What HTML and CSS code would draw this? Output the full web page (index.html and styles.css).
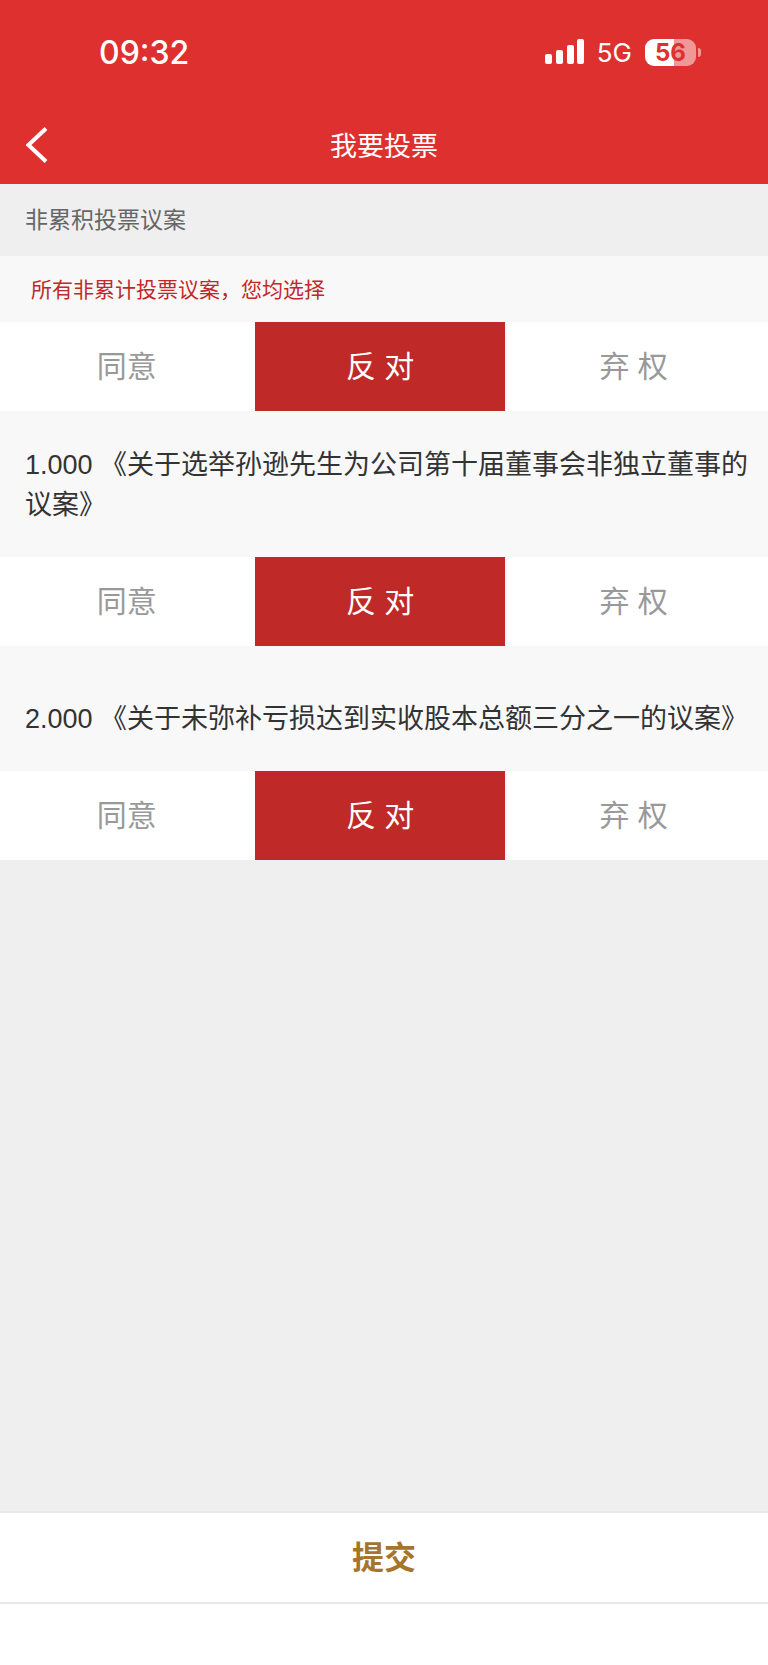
FILE: index.html
```html
<!DOCTYPE html>
<html lang="zh-CN">
<head>
    <meta charset="UTF-8">
    <meta name="viewport" content="width=device-width, initial-scale=1.0">
    <title>我要投票</title>
    <link rel="stylesheet" href="styles.css">
</head>
<body>
    <header class="header">
        <div class="status-bar">
            <span class="time">09:32</span>
            <div class="status-right">
                <svg class="signal" width="40" height="26" viewBox="0 0 40 26" fill="#fff">
                    <rect x="0" y="15" width="7" height="10" rx="2"/>
                    <rect x="11" y="11" width="7" height="14" rx="2"/>
                    <rect x="22" y="6" width="7" height="19" rx="2"/>
                    <rect x="32" y="0" width="7" height="25" rx="2"/>
                </svg>
                <span class="network">5G</span>
                <span class="battery">56</span>
            </div>
        </div>
        <div class="nav-bar">
            <button type="button" class="back" aria-label="返回">
                <svg width="22" height="36" viewBox="0 0 22 36" fill="none" stroke="#fff" stroke-width="4">
                    <path d="M20 1.5L2.5 18L20 34.5"/>
                </svg>
            </button>
            <h1>我要投票</h1>
        </div>
    </header>

    <form class="vote-form">
        <h2 class="section-title">非累积投票议案</h2>

        <p class="hint">所有非累计投票议案，您均选择</p>
        <div class="options">
            <label class="option"><input type="radio" name="all" value="1"><span>同意</span></label>
            <label class="option"><input type="radio" name="all" value="2" checked><span>反 对</span></label>
            <label class="option"><input type="radio" name="all" value="3"><span>弃 权</span></label>
        </div>

        <p class="proposal">1.000 《关于选举孙逊先生为公司第十届董事会非独立董事的议案》</p>
        <div class="options">
            <label class="option"><input type="radio" name="p1" value="1"><span>同意</span></label>
            <label class="option"><input type="radio" name="p1" value="2" checked><span>反 对</span></label>
            <label class="option"><input type="radio" name="p1" value="3"><span>弃 权</span></label>
        </div>

        <p class="proposal">2.000 《关于未弥补亏损达到实收股本总额三分之一的议案》</p>
        <div class="options">
            <label class="option"><input type="radio" name="p2" value="1"><span>同意</span></label>
            <label class="option"><input type="radio" name="p2" value="2" checked><span>反 对</span></label>
            <label class="option"><input type="radio" name="p2" value="3"><span>弃 权</span></label>
        </div>

        <div class="footer">
            <button type="submit" class="submit">提交</button>
        </div>
    </form>
</body>
</html>
```
FILE: styles.css
```css
* {
    box-sizing: border-box;
}
body {
    display: flex;
    flex-direction: column;
    min-height: 100vh;
    margin: 0;
    background-color: #efefef;
    color: #333;
    font-family: "Liberation Sans", "Noto Sans CJK SC", sans-serif;
}
h1, h2, p {
    margin: 0;
    font-weight: normal;
}
button {
    border: none;
    background: none;
    font-family: inherit;
    cursor: pointer;
}

/* 顶部 */
.header {
    background-color: #df3030;
    color: #fff;
}
.status-bar {
    display: flex;
    align-items: center;
    justify-content: space-between;
    height: 104px;
    padding: 0 72px 0 99px;
    font-family: Inter, sans-serif;
}
.time {
    font-size: 32px;
    font-weight: 500;
}
.status-right {
    display: flex;
    align-items: center;
}
.network {
    margin: 0 13px 0 12px;
    font-size: 26px;
    font-weight: 400;
}
.battery {
    position: relative;
    width: 51px;
    height: 27px;
    border-radius: 9px;
    background: linear-gradient(to right, #fff 56%, #f09797 56%);
    color: #df3030;
    font-size: 24px;
    font-weight: 700;
    line-height: 27px;
    text-align: center;
}
.battery::after {
    content: "";
    position: absolute;
    top: 9px;
    right: -5px;
    width: 3px;
    height: 9px;
    border-radius: 0 4px 4px 0;
    background-color: #f09797;
}
.nav-bar {
    display: grid;
    grid-template-columns: 100px 1fr 100px;
    align-items: center;
    height: 80px;
}
.back {
    display: flex;
    padding: 6px 26px 4px;
}
.nav-bar h1 {
    font-size: 27px;
    text-align: center;
}

/* 投票内容 */
.vote-form {
    display: flex;
    flex: 1;
    flex-direction: column;
}
.section-title {
    padding: 0 25px;
    color: #666;
    font-size: 23px;
    line-height: 72px;
}
.hint {
    padding: 2px 31px 0;
    background-color: #f8f8f8;
    color: #bf2a29;
    font-size: 21px;
    line-height: 64px;
}
.proposal {
    display: flex;
    flex-direction: column;
    justify-content: flex-end;
    min-height: 125px;
    padding: 34px 16px 32px 25px;
    background-color: #f8f8f8;
    font-size: 27px;
    line-height: 40px;
}
.options {
    display: grid;
    grid-template-columns: repeat(3, 33%);
    background-color: #fff;
}
.option {
    position: relative;
    color: #999;
    font-size: 30px;
    line-height: 89px;
    text-align: center;
    cursor: pointer;
}
.option:nth-child(2) {
    border-left: 2px solid #fff;
    border-right: 2px solid #f3f3f3;
}
.option input {
    position: absolute;
    opacity: 0;
}
.option span {
    display: block;
}
.option input:checked + span {
    background-color: #bf2a29;
    color: #fff;
}

/* 底部 */
.footer {
    margin-top: auto;
    padding-bottom: 61px;
    background-color: #fff;
}
.submit {
    display: block;
    width: 100%;
    height: 93px;
    padding: 0 0 6px;
    border-top: 2px solid #e8e8e8;
    border-bottom: 2px solid #e8e8e8;
    color: #a6742b;
    font-size: 32px;
    font-weight: bold;
}
```
